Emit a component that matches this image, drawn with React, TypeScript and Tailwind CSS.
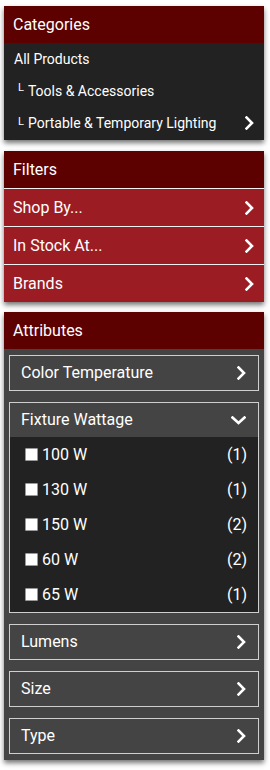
import React from "react";

const font = { fontFamily: "Roboto, 'Liberation Sans', sans-serif" };

function ChevronRight() {
  return (
    <svg width="9" height="14" viewBox="0 0 9 14" fill="none" className="shrink-0">
      <path d="M1.5 1.5L7 7l-5.5 5.5" stroke="white" strokeWidth="2.6" strokeLinecap="square" />
    </svg>
  );
}

function ChevronDown() {
  return (
    <svg width="15" height="9" viewBox="0 0 15 9" fill="none" className="shrink-0">
      <path d="M1.5 1.5L7.5 7l6-5.5" stroke="white" strokeWidth="2.6" strokeLinecap="square" />
    </svg>
  );
}

function PanelHeader({ title }: { title: string }) {
  return (
    <div className="h-[37px] bg-[#5c0000] flex items-center px-[9px] text-[16px] text-white">
      {title}
    </div>
  );
}

const filters = ["Shop By...", "In Stock At...", "Brands"];

const wattages = [
  { label: "100 W", count: 1 },
  { label: "130 W", count: 1 },
  { label: "150 W", count: 2 },
  { label: "60 W", count: 2 },
  { label: "65 W", count: 1 },
];

function AttrBox({ title }: { title: string }) {
  return (
    <div className="h-[36px] border border-[#cfcfcf] flex items-center justify-between pl-[11px] pr-[12px] text-[16px] text-white">
      <span>{title}</span>
      <ChevronRight />
    </div>
  );
}

export default function App() {
  return (
    <div className="w-[270px] min-h-[770px] bg-white pt-[6px] pl-[4px]" style={font}>
      {/* Categories */}
      <div className="w-[260px] shadow-[0_3px_5px_rgba(0,0,0,0.55)]">
        <PanelHeader title="Categories" />
        <div className="bg-[#222222] text-white text-[14px] pb-[1px]">
          <div className="h-8 flex items-center pl-[10px]">All Products</div>
          <div className="h-8 flex items-center pl-[14px]">
            <span className="text-[11px] relative -top-[3px] mr-[4px]">L</span>
            Tools &amp; Accessories
          </div>
          <div className="h-8 flex items-center justify-between pl-[14px] pr-[10px]">
            <span>
              <span className="text-[11px] relative -top-[3px] mr-[4px]">L</span>
              Portable &amp; Temporary Lighting
            </span>
            <ChevronRight />
          </div>
        </div>
      </div>

      {/* Filters */}
      <div className="w-[260px] mt-[11px] shadow-[0_3px_5px_rgba(0,0,0,0.55)]">
        <PanelHeader title="Filters" />
        {filters.map((f) => (
          <div
            key={f}
            className="h-[38px] bg-[#9c1c23] border-t border-[#f2f2f2] flex items-center justify-between pl-[9px] pr-[10px] text-[16px] text-white"
          >
            <span>{f}</span>
            <ChevronRight />
          </div>
        ))}
      </div>

      {/* Attributes */}
      <div className="w-[260px] mt-[10px] shadow-[0_3px_5px_rgba(0,0,0,0.55)]">
        <PanelHeader title="Attributes" />
        <div className="bg-[#444444] px-[5px] py-[6px] flex flex-col gap-[11px]">
          <AttrBox title="Color Temperature" />
          <div className="border border-[#cfcfcf] text-white text-[16px]">
            <div className="h-[34px] flex items-center justify-between pl-[11px] pr-[12px]">
              <span>Fixture Wattage</span>
              <ChevronDown />
            </div>
            <div className="bg-[#222222]">
              {wattages.map((w) => (
                <div key={w.label} className="h-[35px] flex items-center justify-between pl-[15px] pr-[11px]">
                  <span className="flex items-center gap-[4px]">
                    <span className="w-[13px] h-[13px] bg-white border border-[#999] rounded-[1px]" />
                    {w.label}
                  </span>
                  <span>({w.count})</span>
                </div>
              ))}
            </div>
          </div>
          <AttrBox title="Lumens" />
          <AttrBox title="Size" />
          <AttrBox title="Type" />
        </div>
      </div>
    </div>
  );
}
